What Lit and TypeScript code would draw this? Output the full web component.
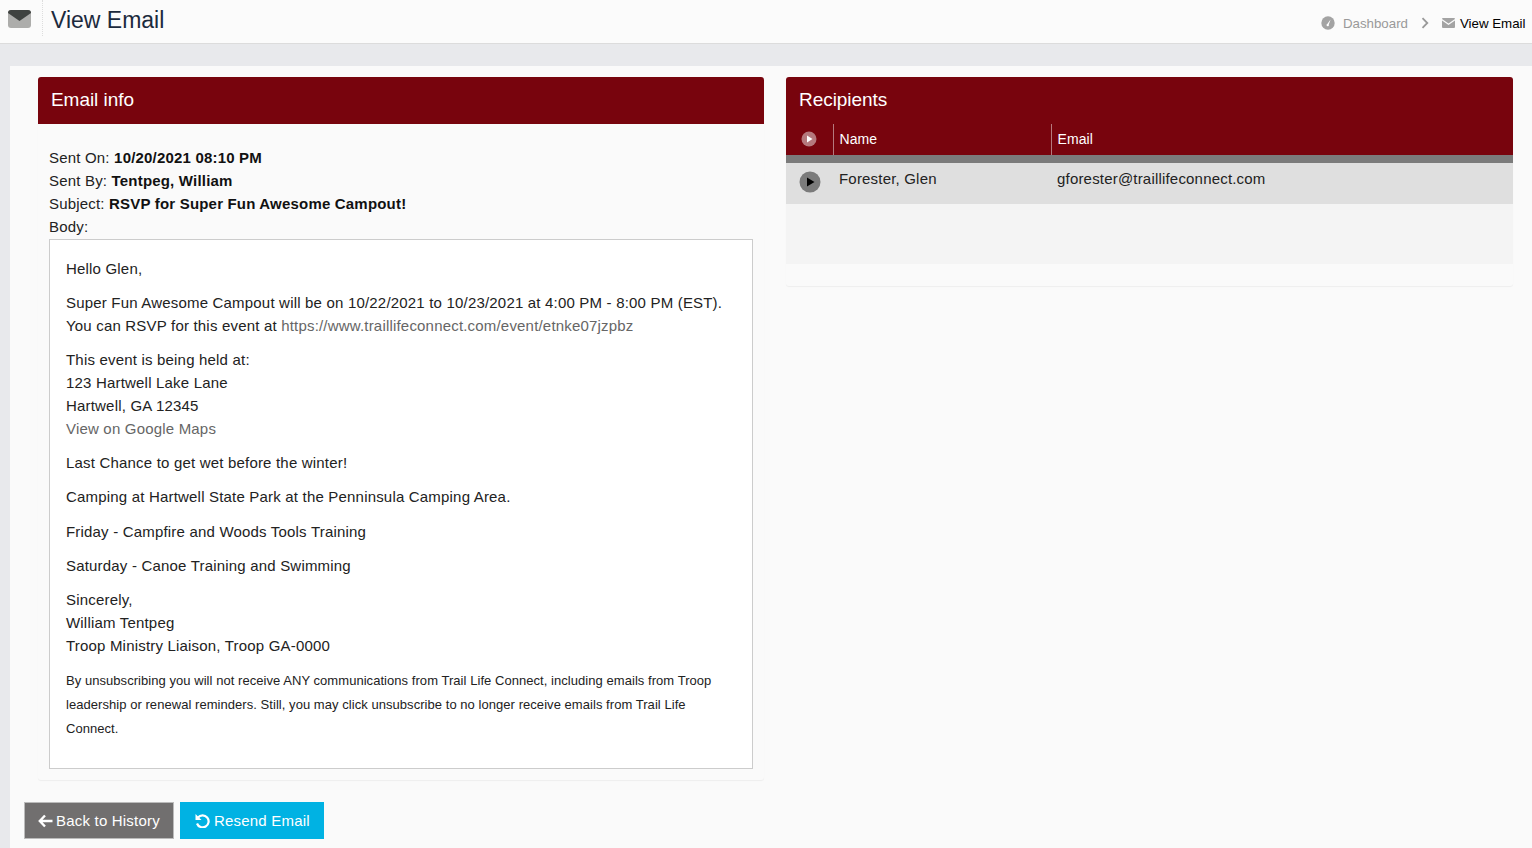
import { LitElement, html, css } from "lit";
import { customElement } from "lit/decorators.js";

@customElement("app-root")
export class AppRoot extends LitElement {
  static styles = css`
    :host { display: block; height: 848px; overflow: hidden; background: #e8e9ec; font-family: "Liberation Sans", Arial, sans-serif; color: #222; font-size: 15px; }
    * { box-sizing: border-box; }
    .top { height: 44px; background: #fbfbfb; border-bottom: 1px solid #dcdcdc; display: flex; align-items: flex-start; }
    .logo { width: 43px; height: 36px; padding: 10px 0 0 8px; border-right: 1px dotted #ddd; }
    .logo svg { display: block; width: 23px; height: 18px; }
    h1 { margin: 5px 0 0 8px; font-size: 23px; font-weight: 400; line-height: 30px; color: #1c2a3d; }
    .crumbs { margin-left: auto; display: flex; align-items: center; height: 16px; margin-top: 15px; padding-right: 6.5px; font-size: 13.3px; color: #000; }
    .muted { color: #999; margin-left: 7.5px; }
    .crumbs svg { display: block; }
    .chev { margin: 0 13px; }
    .env { margin-right: 5px; }
    .main { margin: 22px 0 0 10px; height: 782px; background: #fafafa; padding: 11px 19px 0 28px; display: grid; grid-template-columns: 726px 727px; column-gap: 22px; align-items: start; position: relative; }
    .card { border-radius: 3px; box-shadow: 0 1px 1px rgba(0,0,0,.05); }
    .head { height: 47px; background: #78040d; color: #fff; border-radius: 3px 3px 0 0; padding: 0 13px; font-size: 19px; line-height: 45px; letter-spacing: -.05px; }
    .info { height: 656px; padding: 22px 11px 0; }
    .meta { line-height: 23px; height: 93px; letter-spacing: .19px; color: #222; }
    .meta b { color: #111; }
    .body { height: 530px; width: 704px; background: #fff; border: 1px solid #ccc; padding: 17px 16px 0; line-height: 23px; letter-spacing: .19px; }
    .body p { margin: 0 0 11.11px; }
    .body a { color: #666; text-decoration: none; }
    .body .fine { margin-top: 12px; font-size: 13px; line-height: 24px; letter-spacing: .05px; color: #222; }
    .thead { height: 31px; background: #78040d; color: #fff; display: grid; grid-template-columns: 47px 218px 1fr; font-size: 14px; letter-spacing: .1px; }
    .thead > div { display: flex; align-items: center; height: 31px; padding-bottom: 1px; }
    .thead > div + div { border-left: 1px solid #b5797d; padding-left: 5.5px; }
    .th0 { padding-left: 15px; }
    .bar { height: 8px; background: #7b7b7b; }
    .row { height: 41px; background: #dfdfdf; display: grid; grid-template-columns: 53px 218px 1fr; letter-spacing: .19px; }
    .row > div { padding-top: 6px; line-height: 20px; }
    .row > .play { padding: 8px 0 0 13px; }
    .play svg { display: block; }
    .empty { height: 60px; background: #f4f4f4; }
    .foot { height: 22px; }
    .actions { position: absolute; left: 14px; top: 736px; display: flex; gap: 6px; align-items: flex-start; }
    .btn { display: flex; align-items: center; height: 37px; color: #fff; font-size: 15px; letter-spacing: .2px; }
    .back { width: 150px; background: #716f6f; border: 1px solid #bbb; padding-left: 13px; }
    .back svg { margin-right: 3px; }
    .resend { width: 144px; background: #00b2e3; padding-left: 14px; }
    .resend svg { margin-right: 4px; }
    .btn svg { display: block; }
  `;

  render() {
    return html`
      <div class="top">
        <div class="logo"><svg viewBox="0 0 23 18"><path d="M0 3a3 3 0 0 1 3-3h17a3 3 0 0 1 3 3v12a3 3 0 0 1-3 3H3a3 3 0 0 1-3-3z" fill="#adadab"/><path d="M0 3a3 3 0 0 1 3-3h17a3 3 0 0 1 3 3L11.5 11z" fill="#3f4240"/></svg></div>
        <h1>View Email</h1>
        <div class="crumbs">
          <svg width="14" height="14" viewBox="0 0 14 14"><circle cx="7" cy="7" r="6.7" fill="#a3a3a3"/><path d="M9.6 3.4 7.8 8.6a1.2 1.2 0 1 1-1.5-.6z" fill="#fff"/></svg>
          <span class="muted">Dashboard</span>
          <svg class="chev" width="8" height="12" viewBox="0 0 8 12"><path d="M1.5 1.2 6.3 6l-4.8 4.8" fill="none" stroke="#999" stroke-width="1.8"/></svg>
          <svg class="env" width="13" height="10" viewBox="0 0 13 10"><path d="M0 1a1 1 0 0 1 1-1h11a1 1 0 0 1 1 1L6.5 5.500z" fill="#a3a3a3"/><path d="M0 2.500 6.500 7 13 2.500V9a1 1 0 0 1-1 1H1a1 1 0 0 1-1-1z" fill="#a3a3a3"/></svg>
          <span>View Email</span>
        </div>
      </div>
      <div class="main">
        <div class="card">
          <div class="head">Email info</div>
          <div class="info">
            <div class="meta">
              <div>Sent On: <b>10/20/2021 08:10 PM</b></div>
              <div>Sent By: <b>Tentpeg, William</b></div>
              <div>Subject: <b>RSVP for Super Fun Awesome Campout!</b></div>
              <div>Body:</div>
            </div>
            <div class="body">
              <p>Hello Glen,</p>
              <p>Super Fun Awesome Campout will be on 10/22/2021 to 10/23/2021 at 4:00 PM - 8:00 PM (EST).<br>You can RSVP for this event at <a>https://www.traillifeconnect.com/event/etnke07jzpbz</a></p>
              <p>This event is being held at:<br>123 Hartwell Lake Lane<br>Hartwell, GA 12345<br><a>View on Google Maps</a></p>
              <p>Last Chance to get wet before the winter!</p>
              <p>Camping at Hartwell State Park at the Penninsula Camping Area.</p>
              <p>Friday - Campfire and Woods Tools Training</p>
              <p>Saturday - Canoe Training and Swimming</p>
              <p>Sincerely,<br>William Tentpeg<br>Troop Ministry Liaison, Troop GA-0000</p>
              <p class="fine">By unsubscribing you will not receive ANY communications from Trail Life Connect, including emails from Troop leadership or renewal reminders. Still, you may click unsubscribe to no longer receive emails from Trail Life Connect.</p>
            </div>
          </div>
        </div>
        <div class="card">
          <div class="head">Recipients</div>
          <div class="thead">
            <div class="th0"><svg width="16" height="16" viewBox="0 0 16 16"><circle cx="8" cy="8" r="7.5" fill="#b5797d"/><path d="M6 4.500 11.500 8 6 11.500z" fill="#fff"/></svg></div>
            <div>Name</div>
            <div>Email</div>
          </div>
          <div class="bar"></div>
          <div class="row">
            <div class="play"><svg width="22" height="22" viewBox="0 0 22 22"><circle cx="11" cy="11" r="10.500" fill="#7b7b7b"/><path d="M8 6.500 15.500 11 8 15.500z" fill="#000"/></svg></div>
            <div>Forester, Glen</div>
            <div>gforester@traillifeconnect.com</div>
          </div>
          <div class="empty"></div>
          <div class="foot"></div>
        </div>
        <div class="actions">
          <div class="btn back"><svg width="15" height="14" viewBox="0 0 15 14"><path d="M7 1.500 1.800 7 7 12.500M2 7h12.500" fill="none" stroke="#fff" stroke-width="2.400"/></svg>Back to History</div>
          <div class="btn resend"><svg width="16" height="15" viewBox="0 0 16 15"><path d="M4 4.500a6 6 0 1 1-1 6" fill="none" stroke="#fff" stroke-width="2.200"/><path d="M1.500 1v6h6z" fill="#fff"/></svg>Resend Email</div>
        </div>
      </div>
    `;
  }
}
